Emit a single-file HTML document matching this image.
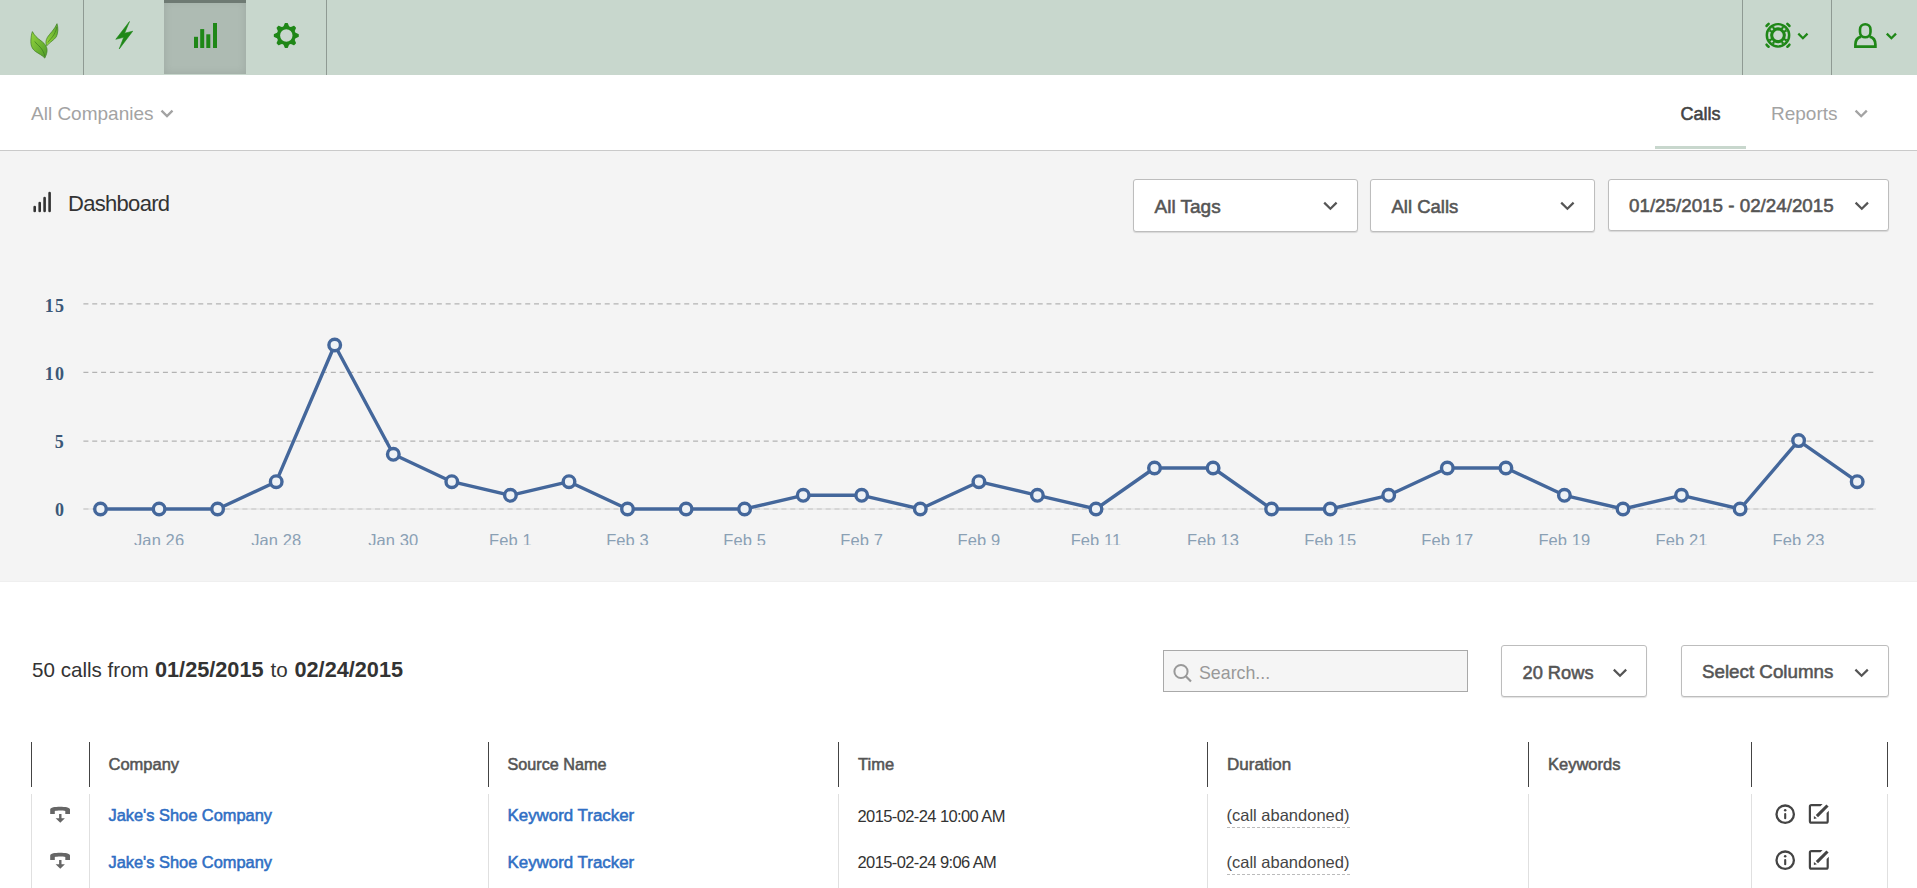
<!DOCTYPE html>
<html><head><meta charset="utf-8">
<style>
html,body{margin:0;padding:0;}
body{width:1917px;height:888px;overflow:hidden;position:relative;background:#fff;font-family:"Liberation Sans",sans-serif;}
.a{position:absolute;}
.t{position:absolute;white-space:nowrap;line-height:1;}
#nav{left:0;top:0;width:1917px;height:75px;background:#c8d7cd;}
.dv{position:absolute;top:0;width:1px;height:75px;background:#8f9a93;}
#act{left:164px;top:0;width:82px;height:74px;background:#aebbb3;box-shadow:inset 0 0 8px rgba(0,0,0,0.10);}
#actbar{left:164px;top:0;width:82px;height:3px;background:#6e7a73;}
#sub{left:0;top:75px;width:1917px;height:75px;background:#fff;border-bottom:1px solid #cacaca;}
#gray{left:0;top:151px;width:1917px;height:430px;background:#f4f4f4;border-bottom:1px solid #efefef;}
.dd{position:absolute;background:#fff;border:1px solid #bdbdbd;border-radius:3px;box-shadow:0 1px 1px rgba(0,0,0,0.12);box-sizing:border-box;}
.hb{position:absolute;top:742px;width:1px;height:45px;background:#444;}
.rb{position:absolute;top:794px;width:1px;height:94px;background:#e0e0e0;}
</style></head><body>
<div id="nav" class="a"></div>
<div id="act" class="a"></div>
<div id="actbar" class="a"></div>
<div class="dv" style="left:83px"></div>
<div class="dv" style="left:326px"></div>
<div class="dv" style="left:1742px"></div>
<div class="dv" style="left:1831px"></div>
<svg class="a" style="left:0;top:0" width="1917" height="888" viewBox="0 0 1917 888">
  <defs>
    <linearGradient id="lg1" x1="0" y1="0" x2="1" y2="1">
      <stop offset="0" stop-color="#94d53c"/><stop offset="1" stop-color="#4f9a2a"/>
    </linearGradient>
    <linearGradient id="lg2" x1="0" y1="1" x2="1" y2="0">
      <stop offset="0" stop-color="#9ad83e"/><stop offset="1" stop-color="#5aa52d"/>
    </linearGradient>
    <clipPath id="xclip"><rect x="0" y="520" width="1917" height="25"/></clipPath>
  </defs>
  <!-- leaf logo -->
  <path d="M32.4,31.6 C34.5,35.5 37,38 41,40.8 C45.5,44 47.5,47.5 47,51.5 C46.6,54.5 45.5,56.5 44.8,58.1 C42.5,55.5 39,53.8 35.5,51.5 C31.5,48.5 30.6,44.5 30.9,40 C31.1,36.5 31.6,33.5 32.4,31.6 Z" fill="url(#lg1)" stroke="#3e7d22" stroke-width="0.7"/>
  <path d="M34.8,41.5 C37.5,45.5 43,47.5 44.8,56.5" fill="none" stroke="#3f7d22" stroke-width="0.8"/>
  <path d="M57,23.7 C58.2,27.5 58.3,33 56.3,36.8 C54.5,39.8 50,41.8 46.8,45.8 C45.6,43.5 45.5,40.5 47.5,37.2 C49.5,34 54.5,29.5 57,23.7 Z" fill="url(#lg2)" stroke="#3e7d22" stroke-width="0.7"/>
  <path d="M47.8,42.5 C50,39 55,36 56.8,27" fill="none" stroke="#3f7d22" stroke-width="0.7"/>
  <!-- bolt -->
  <path d="M129.5,21.5 L124.6,33.2 L132.7,31.2 L119.2,49 L123.7,37.3 L115.8,39.3 Z" fill="#1f8717" stroke="#1f8717" stroke-width="0.6" stroke-linejoin="round"/>
  <!-- bars -->
  <g fill="#1f8717">
    <rect x="194" y="36.8" width="4" height="11.2"/>
    <rect x="200.2" y="29.1" width="4" height="18.9"/>
    <rect x="206.3" y="34.3" width="4" height="13.7"/>
    <rect x="213" y="23" width="4" height="25"/>
  </g>
  <!-- gear -->
  <path d="M286.30,23.00 L286.63,23.00 L286.95,23.02 L287.28,23.04 L287.61,23.07 L287.89,23.40 L288.13,23.97 L288.33,24.53 L288.52,25.05 L288.70,25.50 L288.88,25.87 L289.07,26.16 L289.27,26.37 L289.48,26.52 L289.71,26.63 L289.94,26.72 L290.17,26.82 L290.40,26.90 L290.66,26.95 L290.95,26.94 L291.28,26.87 L291.67,26.73 L292.12,26.54 L292.62,26.30 L293.16,26.05 L293.73,25.82 L294.17,25.79 L294.42,25.99 L294.66,26.21 L294.90,26.43 L295.14,26.66 L295.37,26.90 L295.59,27.14 L295.81,27.38 L296.01,27.63 L295.98,28.07 L295.75,28.64 L295.50,29.18 L295.26,29.68 L295.07,30.13 L294.93,30.52 L294.86,30.85 L294.85,31.14 L294.90,31.40 L294.98,31.63 L295.08,31.86 L295.17,32.09 L295.28,32.32 L295.43,32.53 L295.64,32.73 L295.93,32.92 L296.30,33.10 L296.75,33.28 L297.27,33.47 L297.83,33.67 L298.40,33.91 L298.73,34.19 L298.76,34.52 L298.78,34.85 L298.80,35.17 L298.80,35.50 L298.80,35.83 L298.78,36.15 L298.76,36.48 L298.73,36.81 L298.40,37.09 L297.83,37.33 L297.27,37.53 L296.75,37.72 L296.30,37.90 L295.93,38.08 L295.64,38.27 L295.43,38.47 L295.28,38.68 L295.17,38.91 L295.08,39.14 L294.98,39.37 L294.90,39.60 L294.85,39.86 L294.86,40.15 L294.93,40.48 L295.07,40.87 L295.26,41.32 L295.50,41.82 L295.75,42.36 L295.98,42.93 L296.01,43.37 L295.81,43.62 L295.59,43.86 L295.37,44.10 L295.14,44.34 L294.90,44.57 L294.66,44.79 L294.42,45.01 L294.17,45.21 L293.73,45.18 L293.16,44.95 L292.62,44.70 L292.12,44.46 L291.67,44.27 L291.28,44.13 L290.95,44.06 L290.66,44.05 L290.40,44.10 L290.17,44.18 L289.94,44.28 L289.71,44.37 L289.48,44.48 L289.27,44.63 L289.07,44.84 L288.88,45.13 L288.70,45.50 L288.52,45.95 L288.33,46.47 L288.13,47.03 L287.89,47.60 L287.61,47.93 L287.28,47.96 L286.95,47.98 L286.63,48.00 L286.30,48.00 L285.97,48.00 L285.65,47.98 L285.32,47.96 L284.99,47.93 L284.71,47.60 L284.47,47.03 L284.27,46.47 L284.08,45.95 L283.90,45.50 L283.72,45.13 L283.53,44.84 L283.33,44.63 L283.12,44.48 L282.89,44.37 L282.66,44.28 L282.43,44.18 L282.20,44.10 L281.94,44.05 L281.65,44.06 L281.32,44.13 L280.93,44.27 L280.48,44.46 L279.98,44.70 L279.44,44.95 L278.87,45.18 L278.43,45.21 L278.18,45.01 L277.94,44.79 L277.70,44.57 L277.46,44.34 L277.23,44.10 L277.01,43.86 L276.79,43.62 L276.59,43.37 L276.62,42.93 L276.85,42.36 L277.10,41.82 L277.34,41.32 L277.53,40.87 L277.67,40.48 L277.74,40.15 L277.75,39.86 L277.70,39.60 L277.62,39.37 L277.52,39.14 L277.43,38.91 L277.32,38.68 L277.17,38.47 L276.96,38.27 L276.67,38.08 L276.30,37.90 L275.85,37.72 L275.33,37.53 L274.77,37.33 L274.20,37.09 L273.87,36.81 L273.84,36.48 L273.82,36.15 L273.80,35.83 L273.80,35.50 L273.80,35.17 L273.82,34.85 L273.84,34.52 L273.87,34.19 L274.20,33.91 L274.77,33.67 L275.33,33.47 L275.85,33.28 L276.30,33.10 L276.67,32.92 L276.96,32.73 L277.17,32.53 L277.32,32.32 L277.43,32.09 L277.52,31.86 L277.62,31.63 L277.70,31.40 L277.75,31.14 L277.74,30.85 L277.67,30.52 L277.53,30.13 L277.34,29.68 L277.10,29.18 L276.85,28.64 L276.62,28.07 L276.59,27.63 L276.79,27.38 L277.01,27.14 L277.23,26.90 L277.46,26.66 L277.70,26.43 L277.94,26.21 L278.18,25.99 L278.43,25.79 L278.87,25.82 L279.44,26.05 L279.98,26.30 L280.48,26.54 L280.93,26.73 L281.32,26.87 L281.65,26.94 L281.94,26.95 L282.20,26.90 L282.43,26.82 L282.66,26.72 L282.89,26.63 L283.12,26.52 L283.33,26.37 L283.53,26.16 L283.72,25.87 L283.90,25.50 L284.08,25.05 L284.27,24.53 L284.47,23.97 L284.71,23.40 L284.99,23.07 L285.32,23.04 L285.65,23.02 L285.97,23.00Z M292.5,35.5 A6.2,6.2 0 1 0 280.1,35.5 A6.2,6.2 0 1 0 292.5,35.5Z" fill="#1f8717" fill-rule="evenodd"/>
  <!-- life ring -->
  <g transform="translate(1778,35.3)">
    <circle r="7.4" fill="none" stroke="#1f8717" stroke-width="5.2"/>
    <circle r="11.15" fill="none" stroke="#1f8717" stroke-width="2.5"/>
    <g fill="#c8d7cd">
      <path id="cres" d="M-3.4,-7.2 A8,8 0 0 1 3.4,-7.2 L3.8,-9.2 A10,10 0 0 0 -3.8,-9.2 Z"/>
      <use href="#cres" transform="rotate(90)"/><use href="#cres" transform="rotate(180)"/><use href="#cres" transform="rotate(270)"/>
      <rect x="-1" y="-1" width="2" height="2" transform="rotate(45) translate(0,-8.6)"/>
      <rect x="-1" y="-1" width="2" height="2" transform="rotate(135) translate(0,-8.6)"/>
      <rect x="-1" y="-1" width="2" height="2" transform="rotate(225) translate(0,-8.6)"/>
      <rect x="-1" y="-1" width="2" height="2" transform="rotate(315) translate(0,-8.6)"/>
    </g>
    <g fill="none" stroke="#1f8717" stroke-width="2.6" stroke-linecap="round">
      <path d="M-11.42,-9.41 A14.8,14.8 0 0 1 -9.41,-11.42"/>
      <path d="M11.42,-9.41 A14.8,14.8 0 0 0 9.41,-11.42"/>
      <path d="M-11.42,9.41 A14.8,14.8 0 0 0 -9.41,11.42"/>
      <path d="M11.42,9.41 A14.8,14.8 0 0 1 9.41,11.42"/>
    </g>
  </g>
  <polyline points="1798.3,33.6 1802.9,38.2 1807.5,33.6" fill="none" stroke="#1f8717" stroke-width="2.2"/>
  <!-- user -->
  <rect x="1860" y="24.2" width="10.5" height="13.1" rx="5.25" ry="5.25" fill="none" stroke="#1f8717" stroke-width="2.6"/>
  <path d="M1861.2,36.6 C1857.4,37.5 1855.4,40.5 1855.4,44.5 V46.55 H1875.4 V44.5 C1875.4,40.5 1873.4,37.5 1869.6,36.6" fill="none" stroke="#1f8717" stroke-width="2.7"/>
  <polyline points="1886.8,33.6 1891.4,38.2 1896,33.6" fill="none" stroke="#1f8717" stroke-width="2.3"/>
</svg>
<div id="sub" class="a"></div>
<div class="t" style="left:31px;top:103.91px;font-size:19px;color:#a3a3a3;">All Companies</div>
<div class="t" style="left:1680.5px;top:105.26px;font-size:18px;color:#444;-webkit-text-stroke:0.55px #444;">Calls</div>
<div class="t" style="left:1771px;top:103.91px;font-size:19px;color:#a3a3a3;">Reports</div>
<svg class="a" style="left:0;top:0;overflow:visible" width="1" height="1"><polyline points="161.5,110.6 167.0,116.1 172.5,110.6" fill="none" stroke="#a3a3a3" stroke-width="2.3"/><polyline points="1855.6,110.6 1861.1999999999998,116.19999999999999 1866.8,110.6" fill="none" stroke="#a3a3a3" stroke-width="2.3"/></svg>
<div class="a" style="left:1655px;top:146px;width:91px;height:3px;background:#c8d7cd;"></div>
<div id="gray" class="a"></div>
<svg class="a" style="left:0;top:0;overflow:visible" width="1" height="1">
  <g stroke="#333" stroke-width="2.6" stroke-linecap="round">
    <line x1="34.7" y1="207" x2="34.7" y2="211"/>
    <line x1="39.7" y1="203" x2="39.7" y2="211"/>
    <line x1="44.6" y1="198" x2="44.6" y2="211"/>
    <line x1="49.6" y1="193" x2="49.6" y2="211"/>
  </g>
</svg>
<div class="t" style="left:68px;top:192.87px;font-size:22px;color:#333;letter-spacing:-0.7px;">Dashboard</div>
<div class="dd" style="left:1133px;top:179px;width:225px;height:53px;"></div>
<div class="dd" style="left:1370px;top:179px;width:225px;height:53px;"></div>
<div class="dd" style="left:1608px;top:179px;width:281px;height:52px;"></div>
<div class="t" style="left:1154.5px;top:197.11px;font-size:19px;color:#555;-webkit-text-stroke:0.55px #555;">All Tags</div>
<div class="t" style="left:1391.5px;top:197.54px;font-size:18.5px;color:#555;-webkit-text-stroke:0.55px #555;">All Calls</div>
<div class="t" style="left:1629px;top:197.48px;font-size:18.8px;color:#555;-webkit-text-stroke:0.55px #555;">01/25/2015 - 02/24/2015</div>
<svg class="a" style="left:0;top:0;overflow:visible" width="1" height="1"><polyline points="1324.2,202.6 1330.4,208.79999999999998 1336.6000000000001,202.6" fill="none" stroke="#555" stroke-width="2.2"/><polyline points="1561.2,202.6 1567.4,208.79999999999998 1573.6000000000001,202.6" fill="none" stroke="#555" stroke-width="2.2"/><polyline points="1855.6,202.6 1861.8,208.79999999999998 1868.0,202.6" fill="none" stroke="#555" stroke-width="2.2"/></svg>
<svg class="a" style="left:0;top:0;overflow:visible" width="1" height="1">
  <g stroke="#b3b3b3" stroke-width="1.2" stroke-dasharray="5,3.836">
    <line x1="83.4" y1="303.95" x2="1874" y2="303.95"/>
    <line x1="83.4" y1="372.4" x2="1874" y2="372.4"/>
    <line x1="83.4" y1="441.2" x2="1874" y2="441.2"/>
  </g>
  <line x1="83.4" y1="509" x2="1876" y2="509" stroke="#e6e6e6" stroke-width="1.4"/>
  <line x1="83.4" y1="509" x2="1876" y2="509" stroke="#cfcfcf" stroke-width="1.4" stroke-dasharray="5,3.836"/>
  <g font-family="Liberation Serif" font-weight="bold" font-size="18" fill="#3b5878" text-anchor="end" letter-spacing="1.2">
    <text x="65.2" y="312.2">15</text><text x="65.2" y="380.1">10</text><text x="65" y="448.3">5</text><text x="65.2" y="516.2">0</text>
  </g>
  <g clip-path="url(#xclip)" font-family="Liberation Sans" font-size="16.5" fill="#8aa0b4" text-anchor="middle" letter-spacing="0.1">
    <text x="159.1" y="546">Jan 26</text><text x="276.2" y="546">Jan 28</text><text x="393.3" y="546">Jan 30</text><text x="510.4" y="546">Feb 1</text><text x="627.5" y="546">Feb 3</text><text x="744.6" y="546">Feb 5</text><text x="861.7" y="546">Feb 7</text><text x="978.9" y="546">Feb 9</text><text x="1096.0" y="546">Feb 11</text><text x="1213.1" y="546">Feb 13</text><text x="1330.2" y="546">Feb 15</text><text x="1447.3" y="546">Feb 17</text><text x="1564.4" y="546">Feb 19</text><text x="1681.5" y="546">Feb 21</text><text x="1798.6" y="546">Feb 23</text>
  </g>
  <polyline points="100.5,509.0 159.1,509.0 217.6,509.0 276.2,481.7 334.7,345.0 393.3,454.3 451.8,481.7 510.4,495.3 569.0,481.7 627.5,509.0 686.1,509.0 744.6,509.0 803.2,495.3 861.7,495.3 920.3,509.0 978.9,481.7 1037.4,495.3 1096.0,509.0 1154.5,468.0 1213.1,468.0 1271.6,509.0 1330.2,509.0 1388.7,495.3 1447.3,468.0 1505.9,468.0 1564.4,495.3 1623.0,509.0 1681.5,495.3 1740.1,509.0 1798.6,440.6 1857.2,481.7" fill="none" stroke="#44679b" stroke-width="3.4" stroke-linejoin="round"/>
  <g fill="#eef2f6" stroke="#44679b" stroke-width="3.4"><circle cx="100.5" cy="509.0" r="5.8"/><circle cx="159.1" cy="509.0" r="5.8"/><circle cx="217.6" cy="509.0" r="5.8"/><circle cx="276.2" cy="481.7" r="5.8"/><circle cx="334.7" cy="345.0" r="5.8"/><circle cx="393.3" cy="454.3" r="5.8"/><circle cx="451.8" cy="481.7" r="5.8"/><circle cx="510.4" cy="495.3" r="5.8"/><circle cx="569.0" cy="481.7" r="5.8"/><circle cx="627.5" cy="509.0" r="5.8"/><circle cx="686.1" cy="509.0" r="5.8"/><circle cx="744.6" cy="509.0" r="5.8"/><circle cx="803.2" cy="495.3" r="5.8"/><circle cx="861.7" cy="495.3" r="5.8"/><circle cx="920.3" cy="509.0" r="5.8"/><circle cx="978.9" cy="481.7" r="5.8"/><circle cx="1037.4" cy="495.3" r="5.8"/><circle cx="1096.0" cy="509.0" r="5.8"/><circle cx="1154.5" cy="468.0" r="5.8"/><circle cx="1213.1" cy="468.0" r="5.8"/><circle cx="1271.6" cy="509.0" r="5.8"/><circle cx="1330.2" cy="509.0" r="5.8"/><circle cx="1388.7" cy="495.3" r="5.8"/><circle cx="1447.3" cy="468.0" r="5.8"/><circle cx="1505.9" cy="468.0" r="5.8"/><circle cx="1564.4" cy="495.3" r="5.8"/><circle cx="1623.0" cy="509.0" r="5.8"/><circle cx="1681.5" cy="495.3" r="5.8"/><circle cx="1740.1" cy="509.0" r="5.8"/><circle cx="1798.6" cy="440.6" r="5.8"/><circle cx="1857.2" cy="481.7" r="5.8"/></g>
</svg>
<div class="t" style="left:32px;top:659.56px;font-size:20.6px;color:#333;">50 calls from</div>
<div class="t" style="left:155px;top:658.63px;font-size:21.7px;color:#333;font-weight:bold;">01/25/2015</div>
<div class="t" style="left:270.5px;top:659.56px;font-size:20.6px;color:#333;">to</div>
<div class="t" style="left:294.5px;top:658.63px;font-size:21.7px;color:#333;font-weight:bold;">02/24/2015</div>
<div class="a" style="left:1163px;top:650px;width:305px;height:42px;box-sizing:border-box;border:1px solid #a9a9a9;background:#f5f5f5;"></div>
<svg class="a" style="left:0;top:0;overflow:visible" width="1" height="1">
  <circle cx="1181" cy="671.5" r="6.6" fill="none" stroke="#999" stroke-width="2"/>
  <line x1="1185.8" y1="676.3" x2="1191" y2="681.5" stroke="#999" stroke-width="2.2"/>
</svg>
<div class="t" style="left:1199px;top:664.63px;font-size:17.8px;color:#999;">Search...</div>
<div class="dd" style="left:1501px;top:645px;width:146px;height:52px;"></div>
<div class="dd" style="left:1681px;top:645px;width:208px;height:52px;"></div>
<div class="t" style="left:1522.5px;top:663.85px;font-size:18.25px;color:#555;-webkit-text-stroke:0.55px #555;">20 Rows</div>
<div class="t" style="left:1702px;top:663.40px;font-size:18.78px;color:#555;-webkit-text-stroke:0.55px #555;">Select Columns</div>
<svg class="a" style="left:0;top:0;overflow:visible" width="1" height="1"><polyline points="1613.8,669.6 1620.0,675.8000000000001 1626.2,669.6" fill="none" stroke="#555" stroke-width="2.2"/><polyline points="1855.4,669.6 1861.6000000000001,675.8000000000001 1867.8000000000002,669.6" fill="none" stroke="#555" stroke-width="2.2"/></svg>
<div class="hb" style="left:31px"></div><div class="hb" style="left:89px"></div><div class="hb" style="left:488px"></div><div class="hb" style="left:838px"></div><div class="hb" style="left:1207px"></div><div class="hb" style="left:1528px"></div><div class="hb" style="left:1751px"></div><div class="hb" style="left:1887px"></div>
<div class="rb" style="left:31px"></div><div class="rb" style="left:89px"></div><div class="rb" style="left:488px"></div><div class="rb" style="left:838px"></div><div class="rb" style="left:1207px"></div><div class="rb" style="left:1528px"></div><div class="rb" style="left:1751px"></div><div class="rb" style="left:1887px"></div>
<div class="t" style="left:108.5px;top:756.33px;font-size:16.5px;color:#555;-webkit-text-stroke:0.55px #555;">Company</div>
<div class="t" style="left:507.5px;top:756.18px;font-size:16.2px;color:#555;-webkit-text-stroke:0.55px #555;">Source Name</div>
<div class="t" style="left:858px;top:756.33px;font-size:16.5px;color:#555;-webkit-text-stroke:0.55px #555;">Time</div>
<div class="t" style="left:1227px;top:755.91px;font-size:17px;color:#555;-webkit-text-stroke:0.55px #555;">Duration</div>
<div class="t" style="left:1548px;top:756.33px;font-size:16.5px;color:#555;-webkit-text-stroke:0.55px #555;">Keywords</div>
<div class="t" style="left:108.5px;top:807.41px;font-size:16.4px;color:#2f6fc4;-webkit-text-stroke:0.55px #2f6fc4;">Jake's Shoe Company</div>
<div class="t" style="left:507.5px;top:807.79px;font-size:16.9px;color:#2f6fc4;-webkit-text-stroke:0.55px #2f6fc4;">Keyword Tracker</div>
<div class="t" style="left:857.5px;top:808.03px;font-size:16.5px;color:#333;letter-spacing:-0.6px;">2015-02-24 10:00 AM</div>
<div class="t" style="left:1226.5px;top:807.33px;font-size:16.5px;color:#444;">(call abandoned)</div>
<div class="a" style="left:1227px;top:827px;width:123px;height:0;border-top:1px dashed #bbb;"></div>
<svg class="a" style="left:45px;top:800.0px" width="30" height="30" viewBox="0 0 30 30">
  <path d="M5.2,9.5 C5.2,7.5 10,6.8 15,6.8 C20,6.8 25,7.5 25,9.5 L25,13.9 L20.3,13.9 L20.3,11 C18,10.2 12,10.2 9.8,11 L9.8,13.9 L5.2,13.9 Z M14.1,14 H16.5 V18.2 H19.9 L15.3,22.8 L10.6,18.2 H14.1 Z" fill="#666"/>
</svg>
<svg class="a" style="left:1772px;top:800.0px" width="62" height="30" viewBox="0 0 62 30">
  <circle cx="13.2" cy="14.2" r="8.7" fill="none" stroke="#444" stroke-width="2.3"/>
  <circle cx="13.2" cy="10.3" r="1.25" fill="#444"/>
  <line x1="13.2" y1="14" x2="13.2" y2="18.3" stroke="#444" stroke-width="2.1" stroke-linecap="round"/>
  <path d="M50.6,4 H39.6 C37.6,4 36.8,4.8 36.8,6.8 V21 C36.8,23 37.6,23.8 39.6,23.8 H54 C56,23.8 56.8,23 56.8,21 V10.8 L54.6,13 V21.6 H39 V6.2 H48.4 Z" fill="#444"/>
  <path d="M54.4,4.4 L56.6,6.6 L46,17.2 L43.8,15 Z" fill="#444"/>
  <path d="M41.9,15.9 L44.9,18.2 L41.9,18.9 Z" fill="#444"/>
</svg>
<div class="t" style="left:108.5px;top:853.81px;font-size:16.4px;color:#2f6fc4;-webkit-text-stroke:0.55px #2f6fc4;">Jake's Shoe Company</div>
<div class="t" style="left:507.5px;top:854.69px;font-size:16.9px;color:#2f6fc4;-webkit-text-stroke:0.55px #2f6fc4;">Keyword Tracker</div>
<div class="t" style="left:857.5px;top:854.43px;font-size:16.5px;color:#333;letter-spacing:-0.6px;">2015-02-24 9:06 AM</div>
<div class="t" style="left:1226.5px;top:853.73px;font-size:16.5px;color:#444;">(call abandoned)</div>
<div class="a" style="left:1227px;top:874px;width:123px;height:0;border-top:1px dashed #bbb;"></div>
<svg class="a" style="left:45px;top:846.4px" width="30" height="30" viewBox="0 0 30 30">
  <path d="M5.2,9.5 C5.2,7.5 10,6.8 15,6.8 C20,6.8 25,7.5 25,9.5 L25,13.9 L20.3,13.9 L20.3,11 C18,10.2 12,10.2 9.8,11 L9.8,13.9 L5.2,13.9 Z M14.1,14 H16.5 V18.2 H19.9 L15.3,22.8 L10.6,18.2 H14.1 Z" fill="#666"/>
</svg>
<svg class="a" style="left:1772px;top:846.4px" width="62" height="30" viewBox="0 0 62 30">
  <circle cx="13.2" cy="14.2" r="8.7" fill="none" stroke="#444" stroke-width="2.3"/>
  <circle cx="13.2" cy="10.3" r="1.25" fill="#444"/>
  <line x1="13.2" y1="14" x2="13.2" y2="18.3" stroke="#444" stroke-width="2.1" stroke-linecap="round"/>
  <path d="M50.6,4 H39.6 C37.6,4 36.8,4.8 36.8,6.8 V21 C36.8,23 37.6,23.8 39.6,23.8 H54 C56,23.8 56.8,23 56.8,21 V10.8 L54.6,13 V21.6 H39 V6.2 H48.4 Z" fill="#444"/>
  <path d="M54.4,4.4 L56.6,6.6 L46,17.2 L43.8,15 Z" fill="#444"/>
  <path d="M41.9,15.9 L44.9,18.2 L41.9,18.9 Z" fill="#444"/>
</svg>
</body></html>
